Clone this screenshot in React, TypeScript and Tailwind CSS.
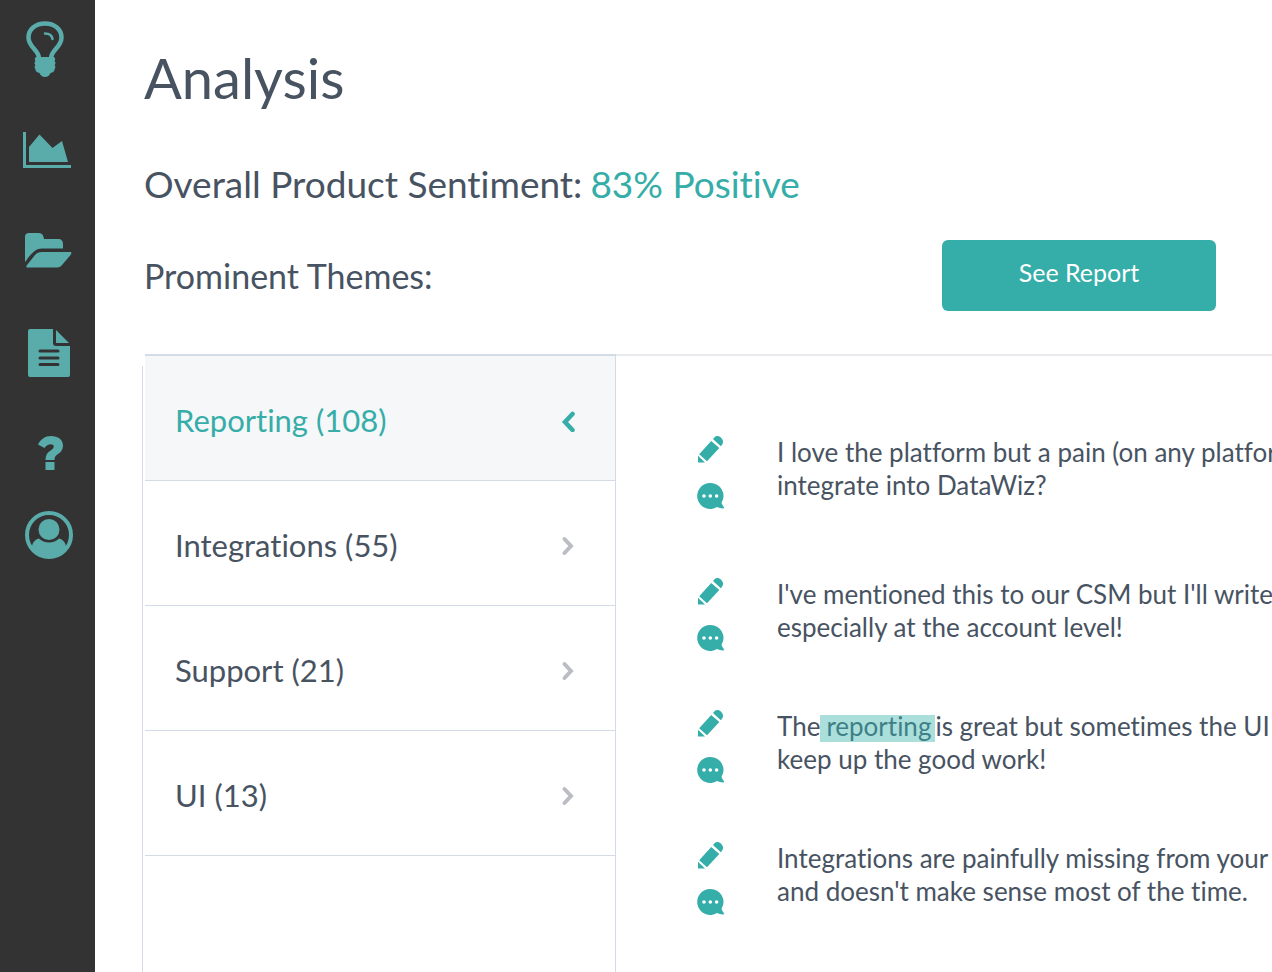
import type { ReactNode } from 'react';

const navItems = [
  { label: 'Insights', icon: <BulbIcon />, height: 'h-[98px] pr-1.5' },
  { label: 'Analysis', icon: <ChartIcon />, height: 'h-[102px] pr-0.5' },
  { label: 'Projects', icon: <FolderIcon />, height: 'h-[100px]' },
  { label: 'Documents', icon: <FileIcon />, height: 'h-[106px] pl-0.5' },
  { label: 'Help', icon: <QuestionIcon />, height: 'h-[94px] pl-1.5' },
  { label: 'Account', icon: <UserIcon />, height: 'h-[70px] pl-0.5' },
];

const themes = [
  { name: 'Reporting', count: 108, active: true },
  { name: 'Integrations', count: 55 },
  { name: 'Support', count: 21 },
  { name: 'UI', count: 13 },
];

const comments: { id: number; lines: ReactNode[] }[] = [
  { id: 1, lines: ['I love the platform but a pain (on any platfor', 'integrate into DataWiz?'] },
  { id: 2, lines: ["I've mentioned this to our CSM but I'll write", 'especially at the account level!'] },
  {
    id: 3,
    lines: [
      <>
        The
        <mark className="inline-block bg-[#aadfdc] pr-1 pb-1 pl-1.5 leading-[23px] text-[#3f7f86]">reporting</mark>
        is great but sometimes the UI
      </>,
      'keep up the good work!',
    ],
  },
  { id: 4, lines: ['Integrations are painfully missing from your', "and doesn't make sense most of the time."] },
];

function BulbIcon() {
  return (
    <svg width="38" height="56" viewBox="0 0 38 56" fill="none" aria-hidden="true">
      <path
        d="M13 37C12.500 29 2.500 26 2.500 16.500C2.500 8 10 2.500 19 2.500S35.500 8 35.500 16.500C35.500 26 25.500 29 25 37"
        stroke="currentColor"
        strokeWidth="4.500"
      />
      <path d="M19 12.500C23 12.500 26 14.500 26.500 18" stroke="currentColor" strokeWidth="2.500" strokeLinecap="round" />
      <path
        d="M10 36H28C29.500 37 29.500 39 28.500 40C29.800 41.500 29.800 43 28.500 44C29.800 45.500 29.500 47 28.500 48C29 50 27 51.500 24.500 52C23.500 54.500 21.500 56 19 56S14.500 54.500 13.500 52C11 51.500 9 50 9.500 48C8.500 47 8.200 45.500 9.500 44C8.200 43 8.200 41.500 9.500 40C8.500 39 8.500 37 10 36Z"
        fill="currentColor"
      />
    </svg>
  );
}

function ChartIcon() {
  return (
    <svg width="48" height="37" viewBox="0 0 48 37" fill="currentColor" aria-hidden="true">
      <path d="M0 1H3V34H48V37H0Z" />
      <path d="M6 16L16.500 3.500L29.500 17L39 10L45 31H6Z" />
    </svg>
  );
}

function FolderIcon() {
  return (
    <svg width="48" height="36" viewBox="0 0 48 36" fill="currentColor" aria-hidden="true">
      <path d="M1 30V5C1 2 2.500 1 5 1H15C18 1 19.500 3 20 7H34C37.500 7 39 9 39 12V16.500H18C10 16.500 5 25 1 30Z" />
      <path d="M18 20H46C48 20 47.500 21.500 46.500 23L38 33C37 34.500 35.500 35.500 33 35.500H3.500C2 35.500 2 34.500 3 33L11 23C12.500 21 15 20 18 20Z" />
    </svg>
  );
}

function FileIcon() {
  return (
    <svg width="42" height="48" viewBox="0 0 42 48" fill="currentColor" aria-hidden="true">
      <path
        fillRule="evenodd"
        d="M2 0H25V14Q25 17 28 17H42V46Q42 48 40 48H2Q0 48 0 46V2Q0 0 2 0ZM12 20.500Q10.500 20.500 10.500 22T12 23.500H30Q31.500 23.500 31.500 22T30 20.500ZM12 27.500Q10.500 27.500 10.500 29T12 30.500H30Q31.500 30.500 31.500 29T30 27.500ZM12 34Q10.500 34 10.500 35.500T12 37H30Q31.500 37 31.500 35.500T30 34Z"
      />
      <path d="M28 1L41 14H28Z" />
    </svg>
  );
}

function QuestionIcon() {
  return (
    <svg width="26" height="34" viewBox="0 0 26 34" fill="currentColor" aria-hidden="true">
      <path d="M0 8.500C3 3 7 0 13 0C20 0 25 3.800 25 9.500C25 13.500 23 16 20 18C17.500 19.800 16.500 21 16.500 24H7.500C7.500 19.500 9 17 12 15C14.500 13.200 15.800 12 15.800 10.500C15.800 9 14.500 8.300 12.500 8.300C10.300 8.300 8.500 9.500 6.500 12Z" />
      <path d="M7.500 26H16.500V34H7.500Z" />
    </svg>
  );
}

function UserIcon() {
  return (
    <svg width="48" height="48" viewBox="0 0 48 48" aria-hidden="true">
      <circle cx="24" cy="24" r="22" fill="none" stroke="currentColor" strokeWidth="4" />
      <circle cx="24" cy="18.500" r="10.500" fill="currentColor" />
      <path
        d="M14 27.500C16.500 30 20 31.500 24 31.500S31.500 30 34 27.500C38 28.500 40.500 31.500 41 35.500L38 42C29 48.500 19 48.500 10 42L7 35.500C7.500 31.500 10 28.500 14 27.500Z"
        fill="currentColor"
      />
    </svg>
  );
}

function PencilIcon() {
  return (
    <svg width="28" height="28" viewBox="0 0 28 28" fill="currentColor" aria-hidden="true">
      <path d="M16 4L18 1.800C21-1.200 28 4 25.500 9L23.800 11.200Z" />
      <path d="M14.200 6L22.300 13L10 26.300L2.200 19.200Z" />
      <path d="M1 20.800L8 27.500H1Z" />
    </svg>
  );
}

function BubbleIcon() {
  return (
    <svg width="28" height="28" viewBox="0 0 28 28" fill="currentColor" aria-hidden="true">
      <path
        fillRule="evenodd"
        d="M13.300 1A13 13 0 0 1 24.500 20.800C25 23 27 24.500 27.300 26.300C25.500 26.800 22 26 20 25.100A13 13 0 1 1 13.300 1ZM7 12.200A1.800 1.800 0 1 0 7 15.800A1.800 1.800 0 1 0 7 12.200ZM13.300 12.200A1.800 1.800 0 1 0 13.300 15.800A1.800 1.800 0 1 0 13.300 12.200ZM19.600 12.200A1.800 1.800 0 1 0 19.600 15.800A1.800 1.800 0 1 0 19.600 12.200Z"
      />
    </svg>
  );
}

function Chevron({ active }: { active?: boolean }) {
  return active ? (
    <svg width="16" height="22" viewBox="0 0 16 22" fill="none" className="text-[#35ada8]" aria-hidden="true">
      <path d="M12.500 4L5 12L12.500 20" stroke="currentColor" strokeWidth="4.500" strokeLinecap="round" />
    </svg>
  ) : (
    <svg width="16" height="22" viewBox="0 0 16 22" fill="none" className="text-[#bbbdc4]" aria-hidden="true">
      <path d="M4.500 4L11 11L4.500 18" stroke="currentColor" strokeWidth="4" strokeLinecap="round" />
    </svg>
  );
}

function Sidebar() {
  return (
    <nav className="w-[95px] shrink-0 bg-[#333333] text-[#5aacab]">
      {navItems.map((item) => (
        <a
          key={item.label}
          href="#"
          aria-label={item.label}
          className={`flex items-center justify-center ${item.height}`}
        >
          {item.icon}
        </a>
      ))}
    </nav>
  );
}

function ThemeList() {
  return (
    <div className="flex w-[474px] shrink-0 gap-0.5">
      <div className="mt-3 w-px bg-[#d3dbe7]" />
      <ul className="flex-1 border-t-2 border-r border-[#d3dbe7]">
        {themes.map((theme) => (
          <li key={theme.name} className="border-b border-[#d3dbe7]">
            <button
              type="button"
              className={`flex h-[124px] w-full items-center justify-between pr-[39px] pl-[30px] text-left text-[31px] leading-10 ${
                theme.active ? 'bg-[#f5f7f9] text-[#35ada8]' : 'text-[#485362]'
              }`}
            >
              <span className="pt-1">
                {theme.name} ({theme.count})
              </span>
              <span className="pt-1.5">
                <Chevron active={theme.active} />
              </span>
            </button>
          </li>
        ))}
      </ul>
    </div>
  );
}

function CommentList() {
  return (
    <ul className="flex min-w-0 flex-1 flex-col gap-[57px] overflow-hidden border-t-2 border-[#e8eaee] pt-[79px] pl-[81px]">
      {comments.map((comment) => (
        <li key={comment.id} className="flex gap-[52px] first:mb-2.5">
          <div className="flex h-[75px] shrink-0 flex-col justify-between text-[#35ada8]">
            <button type="button" aria-label="Edit">
              <PencilIcon />
            </button>
            <button type="button" aria-label="Reply">
              <BubbleIcon />
            </button>
          </div>
          <div className="pt-px text-[26px] leading-[33px] whitespace-nowrap">
            {comment.lines.map((line, i) => (
              <p key={i}>{line}</p>
            ))}
          </div>
        </li>
      ))}
    </ul>
  );
}

export default function App() {
  return (
    <div className="flex min-h-screen bg-white font-['Lato',sans-serif] text-[#485362] [font-variant-ligatures:none]">
      <Sidebar />
      <main className="flex min-w-0 flex-1 flex-col pl-[47px]">
        <header className="pt-[46px] pr-14 pl-0.5">
          <h1 className="text-[56px] leading-[64px]">Analysis</h1>
          <p className="mt-[49px] flex flex-wrap gap-x-2 text-[37px] leading-[50px]">
            <span>Overall Product Sentiment:</span>
            <span className="text-[#35ada8]">83% Positive</span>
          </p>
          <div className="mt-[31px] flex items-center justify-between">
            <h2 className="text-[34px] leading-[50px]">Prominent Themes:</h2>
            <button
              type="button"
              className="h-[71px] w-[274px] rounded-md bg-[#35ada8] pb-1.5 text-[25px] text-white"
            >
              See Report
            </button>
          </div>
        </header>
        <section className="mt-[43px] flex flex-1">
          <ThemeList />
          <CommentList />
        </section>
      </main>
    </div>
  );
}
